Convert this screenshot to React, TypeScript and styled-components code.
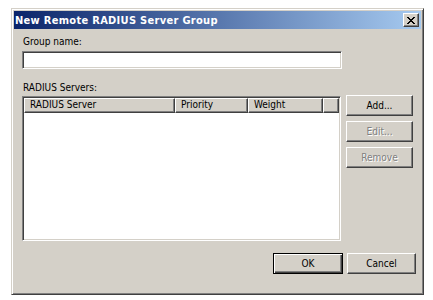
import React from "react";
import styled, { createGlobalStyle, css } from "styled-components";

const Global = createGlobalStyle`
  html, body { margin: 0; padding: 0; background: #ffffff; }
  body { font-family: "DejaVu Sans Condensed", "Liberation Sans", Arial, sans-serif; font-size: 10px; }
`;

const Page = styled.div`
  padding: 8px 0 0 11px;
`;

const raised = css`
  border-style: solid;
  border-width: 1px;
  border-color: #ffffff #404040 #404040 #ffffff;
  box-shadow: inset -1px -1px 0 #808080, inset 1px 1px 0 #d4d0c8;
`;

const sunken = css`
  border-style: solid;
  border-width: 1px;
  border-color: #808080 #ffffff #ffffff #808080;
  box-shadow: inset 1px 1px 0 #404040, inset -1px -1px 0 #d4d0c8;
`;

const Window = styled.div`
  box-sizing: border-box;
  width: 413px;
  height: 287px;
  background: #d4d0c8;
  border-style: solid;
  border-width: 1px;
  border-color: #d4d0c8 #404040 #404040 #d4d0c8;
  box-shadow: inset 1px 1px 0 #ffffff, inset -1px -1px 0 #808080;
  padding: 2px;
  display: flex;
  flex-direction: column;
`;

const TitleBar = styled.div`
  height: 18px;
  background: linear-gradient(to right, #0a246a, #a6caf0);
  display: flex;
  align-items: center;
  justify-content: space-between;
  padding: 0 2px 0 1px;
`;

const Title = styled.span`
  color: #ffffff;
  font-weight: bold;
  font-size: 11px;
  letter-spacing: 0.3px;
`;

const CloseBtn = styled.div`
  box-sizing: border-box;
  width: 16px;
  height: 14px;
  background: #d4d0c8;
  ${raised};
  display: flex;
  align-items: center;
  justify-content: center;
`;

const Body = styled.div`
  flex: 1;
  display: flex;
  flex-direction: column;
  padding: 6px 8px 0 8px;
`;

const Label = styled.div`
  color: #000000;
  line-height: 13px;
  margin-left: 1px;
`;

const TextInput = styled.div`
  box-sizing: border-box;
  width: 320px;
  height: 18px;
  background: #ffffff;
  ${sunken};
  margin-top: 3px;
`;

const ServersLabel = styled(Label)`
  margin-top: 12px;
`;

const ListRow = styled.div`
  display: flex;
  gap: 5px;
  margin-top: 2px;
`;

const ListView = styled.div`
  box-sizing: border-box;
  width: 320px;
  height: 145px;
  background: #ffffff;
  ${sunken};
  padding: 1px;
`;

const Header = styled.div`
  display: flex;
  height: 15px;
`;

const HeaderCell = styled.div<{ $w?: number }>`
  box-sizing: border-box;
  ${(p) => (p.$w ? `width: ${p.$w}px;` : "flex: 1;")}
  height: 15px;
  background: #d4d0c8;
  border-style: solid;
  border-width: 1px;
  border-color: #ffffff #404040 #404040 #ffffff;
  box-shadow: inset -1px -1px 0 #808080;
  padding-left: 5px;
  line-height: 12px;
  white-space: nowrap;
  overflow: hidden;
`;

const SideButtons = styled.div`
  display: flex;
  flex-direction: column;
  gap: 5px;
  margin-top: -1px;
`;

const Button = styled.button<{ $disabled?: boolean; $default?: boolean; $w?: number }>`
  box-sizing: border-box;
  width: ${(p) => p.$w ?? 67}px;
  height: 21px;
  padding: 0;
  font-family: inherit;
  font-size: 10px;
  background: #d4d0c8;
  color: ${(p) => (p.$disabled ? "#808080" : "#000000")};
  text-shadow: ${(p) => (p.$disabled ? "1px 1px 0 #ffffff" : "none")};
  ${(p) =>
    p.$default
      ? css`
          border: 1px solid #000000;
          box-shadow: inset 1px 1px 0 #ffffff, inset -1px -1px 0 #404040, inset -2px -2px 0 #808080;
        `
      : raised}
`;

const Footer = styled.div`
  display: flex;
  justify-content: flex-end;
  gap: 4px;
  margin-top: 12px;
  margin-right: -3px;
`;

export default function App() {
  return (
    <>
      <Global />
      <Page>
        <Window>
          <TitleBar>
            <Title>New Remote RADIUS Server Group</Title>
            <CloseBtn>
              <svg width="8" height="7" viewBox="0 0 8 7">
                <path d="M0 0h2v1h1v1h2V1h1V0h2v1H7v1H6v1H5v1h1v1h1v1h1v1H6V6H5V5H3v1H2v1H0V6h1V5h1V4h1V3H2V2H1V1H0z" fill="#000" />
              </svg>
            </CloseBtn>
          </TitleBar>
          <Body>
            <Label>Group name:</Label>
            <TextInput />
            <ServersLabel>RADIUS Servers:</ServersLabel>
            <ListRow>
              <ListView>
                <Header>
                  <HeaderCell $w={151}>RADIUS Server</HeaderCell>
                  <HeaderCell $w={73}>Priority</HeaderCell>
                  <HeaderCell $w={75}>Weight</HeaderCell>
                  <HeaderCell />
                </Header>
              </ListView>
              <SideButtons>
                <Button>Add...</Button>
                <Button $disabled>Edit...</Button>
                <Button $disabled>Remove</Button>
              </SideButtons>
            </ListRow>
            <Footer>
              <Button $default $w={70}>OK</Button>
              <Button $w={69}>Cancel</Button>
            </Footer>
          </Body>
        </Window>
      </Page>
    </>
  );
}
